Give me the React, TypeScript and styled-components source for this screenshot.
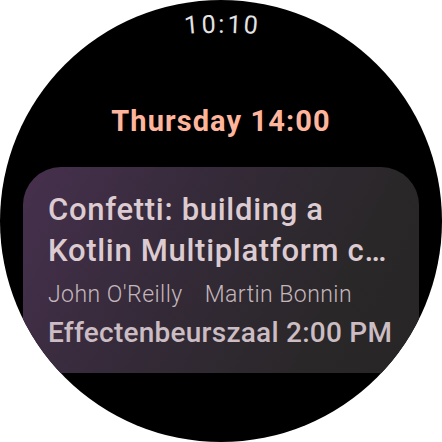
import styled, { createGlobalStyle } from "styled-components";

const GlobalStyle = createGlobalStyle`
  html, body {
    margin: 0;
    padding: 0;
    background: #ffffff;
  }
  body {
    font-family: Roboto, "Noto Sans", "Liberation Sans", sans-serif;
    -webkit-font-smoothing: antialiased;
  }
`;

type Session = {
  titleLines: string[];
  speakers: string[];
  room: string;
  time: string;
};

const session: Session = {
  titleLines: ["Confetti: building a", "Kotlin Multiplatform conference app in 40min"],
  speakers: ["John O'Reilly", "Martin Bonnin"],
  room: "Effectenbeurszaal",
  time: "2:00 PM",
};

// the watch clock follows the curve of the bezel, so each glyph leans a bit
function CurvedClock({ text }: { text: string }) {
  const chars = text.split("");
  const mid = (chars.length - 1) / 2;
  return (
    <Clock>
      {chars.map((c, i) => (
        <ClockChar key={i} $tilt={(i - mid) * 2.6}>
          {c}
        </ClockChar>
      ))}
    </Clock>
  );
}

function SessionCard({ titleLines, speakers, room, time }: Session) {
  return (
    <Card>
      <CardTitle>
        {titleLines.map((line) => (
          <TitleLine key={line}>{line}</TitleLine>
        ))}
      </CardTitle>
      <Speakers>
        {speakers.map((s) => (
          <Speaker key={s}>{s}</Speaker>
        ))}
      </Speakers>
      <Location>
        {room} {time}
      </Location>
    </Card>
  );
}

export default function App() {
  return (
    <>
      <GlobalStyle />
      <Screen>
        <CurvedClock text="10:10" />
        <DayHeader>Thursday 14:00</DayHeader>
        <List>
          <SessionCard {...session} />
        </List>
      </Screen>
    </>
  );
}

const Screen = styled.div`
  width: 442px;
  height: 442px;
  border-radius: 50%;
  background: #000000;
  overflow: hidden;
  display: flex;
  flex-direction: column;
  align-items: center;
  padding-top: 10px;
  box-sizing: border-box;
`;

const Clock = styled.div`
  display: flex;
  height: 30px;
  align-items: baseline;
  font-size: 25px;
  line-height: 30px;
  color: #e3e3e3;
  letter-spacing: -0.6px;
`;

const ClockChar = styled.span<{ $tilt: number }>`
  display: inline-block;
  transform: rotate(${(p) => p.$tilt}deg);
  transform-origin: 50% 300%;
`;

const DayHeader = styled.div`
  margin-top: 65px;
  font-size: 29px;
  line-height: 32px;
  font-weight: 700;
  letter-spacing: 1.1px;
  color: #ffb59b;
`;

const List = styled.div`
  margin-top: 30px;
  width: 396px;
  height: 206px;
  overflow: hidden;
  flex: none;
`;

const Card = styled.div`
  box-sizing: border-box;
  width: 396px;
  padding: 22px 26px 30px 25px;
  border-radius: 38px;
  background: linear-gradient(118deg, #47304e 0%, #342a38 40%, #2a2729 75%, #272526 100%);
  display: flex;
  flex-direction: column;
`;

const CardTitle = styled.div`
  display: flex;
  flex-direction: column;
  font-size: 31px;
  line-height: 41px;
  font-weight: 500;
  letter-spacing: 0.7px;
  color: #dccbd0;
`;

const TitleLine = styled.div`
  white-space: nowrap;
  overflow: hidden;
  text-overflow: ellipsis;
`;

const Speakers = styled.div`
  margin-top: 10px;
  display: flex;
  gap: 22px;
  font-size: 23px;
  line-height: 28px;
  font-weight: 300;
  letter-spacing: 0.45px;
  color: #c4b7bc;
`;

const Speaker = styled.span`
  white-space: nowrap;
`;

const Location = styled.div`
  margin-top: 7px;
  font-size: 28px;
  line-height: 34px;
  font-weight: 500;
  letter-spacing: 0.25px;
  color: #cbbdc3;
  white-space: nowrap;
`;
